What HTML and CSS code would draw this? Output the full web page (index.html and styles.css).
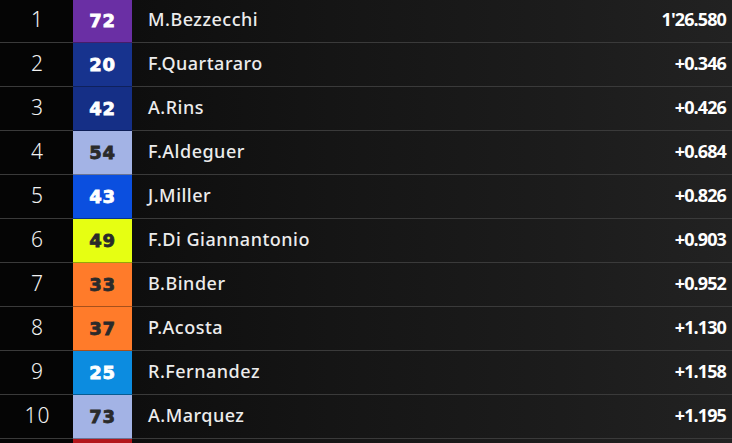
FILE: index.html
```html
<!DOCTYPE html>
<html>
<head>
<meta charset="utf-8">
<link rel="stylesheet" href="styles.css">
</head>
<body>
<div class="board">
  <div class="row"><div class="pos">1</div><div class="num c-purple">72</div><div class="name">M.Bezzecchi</div><div class="time">1'26.580</div></div>
  <div class="row"><div class="pos">2</div><div class="num c-navy">20</div><div class="name">F.Quartararo</div><div class="time">+0.346</div></div>
  <div class="row"><div class="pos">3</div><div class="num c-navy2">42</div><div class="name">A.Rins</div><div class="time">+0.426</div></div>
  <div class="row"><div class="pos">4</div><div class="num c-lav dark">54</div><div class="name">F.Aldeguer</div><div class="time">+0.684</div></div>
  <div class="row"><div class="pos">5</div><div class="num c-blue">43</div><div class="name">J.Miller</div><div class="time">+0.826</div></div>
  <div class="row"><div class="pos">6</div><div class="num c-lime dark">49</div><div class="name">F.Di Giannantonio</div><div class="time">+0.903</div></div>
  <div class="row"><div class="pos">7</div><div class="num c-orange dark">33</div><div class="name">B.Binder</div><div class="time">+0.952</div></div>
  <div class="row"><div class="pos">8</div><div class="num c-orange dark">37</div><div class="name">P.Acosta</div><div class="time">+1.130</div></div>
  <div class="row"><div class="pos">9</div><div class="num c-sky">25</div><div class="name">R.Fernandez</div><div class="time">+1.158</div></div>
  <div class="row"><div class="pos">10</div><div class="num c-lav dark">73</div><div class="name">A.Marquez</div><div class="time">+1.195</div></div>
  <div class="row"><div class="pos"></div><div class="num c-red"></div><div class="name"></div><div class="time"></div></div>
</div>
</body>
</html>
```
FILE: styles.css
```css
* { box-sizing: border-box; }
html, body { margin: 0; padding: 0; background: #050505; overflow: hidden; }
.board { width: 732px; margin-top: -1px; }
.row {
  display: flex;
  height: 44px;
  background: linear-gradient(90deg, #050505 0, #050505 132px, #0e0e0e 132px, #151515 330px, #1c1c1c 560px, #222222 732px);
}
.pos, .name, .time { border-bottom: 1px solid #3a3a3a; padding-bottom: 3px; }
.pos {
  width: 73px;
  display: flex; align-items: center; justify-content: center;
  color: #f2f2f2;
  font-family: "Noto Sans", sans-serif;
  font-weight: 300;
  font-size: 21px;
  letter-spacing: 1px;
  padding-left: 2px;
}
.num {
  width: 59px;
  display: flex; align-items: center; justify-content: center;
  font-family: "DejaVu Sans", sans-serif;
  font-weight: 700;
  font-size: 18px;
  letter-spacing: 0.8px;
  -webkit-text-stroke: 0.8px currentColor;
  color: #ffffff;
  border-bottom: 1px solid rgba(0,0,0,0.35);
  padding-bottom: 1px;
}
.num.dark { color: #2a2a2a; }
.name {
  flex: 1;
  display: flex; align-items: center;
  padding-left: 16px;
  color: #ececec;
  font-family: "Noto Sans", sans-serif;
  font-weight: 500;
  font-size: 18px;
  letter-spacing: 0.5px;
}
.time {
  width: 200px;
  display: flex; align-items: center; justify-content: flex-end;
  padding-right: 6px;
  color: #ffffff;
  font-family: "Open Sans", sans-serif;
  font-weight: 700;
  font-size: 18px;
  letter-spacing: -0.9px;
}
.c-purple { background: #6a2fa4; }
.c-navy { background: #17338e; }
.c-navy2 { background: #152f86; }
.c-lav { background: #a3b3e5; }
.c-blue { background: #0b4fdf; }
.c-lime { background: #e6ff12; }
.c-orange { background: #ff7b2a; }
.c-sky { background: #0c8ce0; }
.c-red { background: #b3161b; }
```
